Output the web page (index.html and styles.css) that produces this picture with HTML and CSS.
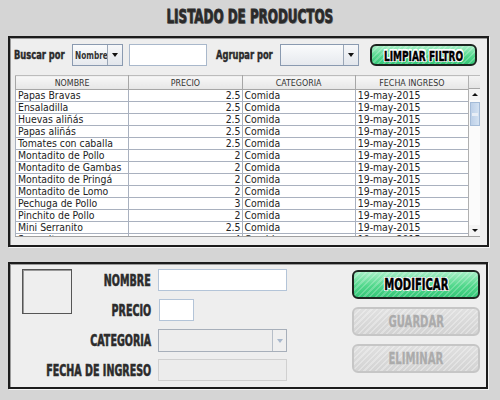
FILE: index.html
```html
<!DOCTYPE html>
<html lang="es">
<head>
<meta charset="utf-8">
<title>Listado de productos</title>
<link rel="stylesheet" href="styles.css">
</head>
<body>
<div class="title"><span class="sq">LISTADO DE PRODUCTOS</span></div>

<section class="panel top">
  <div class="filters">
    <span class="flabel l1"><span class="sq">Buscar por</span></span>
    <div class="combo c1"><span class="cval"><span class="sq">Nombre</span></span><span class="carrow"><i class="tri"></i></span></div>
    <div class="field search"></div>
    <span class="flabel l2"><span class="sq">Agrupar por</span></span>
    <div class="combo c2"><span class="cval"></span><span class="carrow"><i class="tri"></i></span></div>
    <div class="btn green limpiar"><span class="sq">LIMPIAR FILTRO</span></div>
  </div>

  <div class="tablebox">
    <div class="tablewrap">
      <table>
        <thead>
          <tr><th>NOMBRE</th><th>PRECIO</th><th>CATEGORIA</th><th>FECHA INGRESO</th></tr>
        </thead>
        <tbody>
          <tr><td>Papas Bravas</td><td class="num">2.5</td><td>Comida</td><td>19-may-2015</td></tr>
          <tr><td>Ensaladilla</td><td class="num">2.5</td><td>Comida</td><td>19-may-2015</td></tr>
          <tr><td>Huevas aliñás</td><td class="num">2.5</td><td>Comida</td><td>19-may-2015</td></tr>
          <tr><td>Papas aliñás</td><td class="num">2.5</td><td>Comida</td><td>19-may-2015</td></tr>
          <tr><td>Tomates con caballa</td><td class="num">2.5</td><td>Comida</td><td>19-may-2015</td></tr>
          <tr><td>Montadito de Pollo</td><td class="num">2</td><td>Comida</td><td>19-may-2015</td></tr>
          <tr><td>Montadito de Gambas</td><td class="num">2</td><td>Comida</td><td>19-may-2015</td></tr>
          <tr><td>Montadito de Pringá</td><td class="num">2</td><td>Comida</td><td>19-may-2015</td></tr>
          <tr><td>Montadito de Lomo</td><td class="num">2</td><td>Comida</td><td>19-may-2015</td></tr>
          <tr><td>Pechuga de Pollo</td><td class="num">3</td><td>Comida</td><td>19-may-2015</td></tr>
          <tr><td>Pinchito de Pollo</td><td class="num">2</td><td>Comida</td><td>19-may-2015</td></tr>
          <tr><td>Mini Serranito</td><td class="num">2.5</td><td>Comida</td><td>19-may-2015</td></tr>
          <tr><td>Serranito</td><td class="num">4</td><td>Comida</td><td>19-may-2015</td></tr>
        </tbody>
      </table>
    </div>
    <div class="scroll">
      <div class="scorner"></div>
      <div class="sbtn"><i class="tri up"></i></div>
      <div class="strack">
        <div class="thumb"><i class="grip"></i></div>
      </div>
      <div class="sbtn"><i class="tri"></i></div>
    </div>
  </div>
</section>

<section class="panel bottom">
  <div class="form">
    <div class="photo"></div>
    <span class="label r1"><span class="sq">NOMBRE</span></span>
    <div class="field wide r1"></div>
    <span class="label r2"><span class="sq">PRECIO</span></span>
    <div class="field short r2"></div>
    <span class="label r3"><span class="sq">CATEGORIA</span></span>
    <div class="combo disabled wide r3"><span class="cval"></span><span class="carrow"><i class="tri light"></i></span></div>
    <span class="label r4"><span class="sq">FECHA DE INGRESO</span></span>
    <div class="field wide off r4"></div>
  </div>
  <div class="actions">
    <div class="btn green big"><span class="sq">MODIFICAR</span></div>
    <div class="btn gray big"><span class="sq">GUARDAR</span></div>
    <div class="btn gray big"><span class="sq">ELIMINAR</span></div>
  </div>
</section>
</body>
</html>
```

FILE: styles.css
```css
* { box-sizing: border-box; }

html, body {
  margin: 0;
  padding: 0;
}

body {
  width: 500px;
  height: 400px;
  overflow: hidden;
  background: #d5d5d5;
  font-family: "DejaVu Sans Condensed", "DejaVu Sans", sans-serif;
  color: #222;
}

.sq {
  display: inline-block;
  white-space: nowrap;
}

.title {
  height: 34px;
  display: flex;
  align-items: center;
  justify-content: center;
  padding-bottom: 2px;
  margin-bottom: 2px;
  font-weight: bold;
  font-size: 17px;
  color: #2a2a2a;
  text-shadow: 1px 1px 0 #9a9a9a;
  -webkit-text-stroke: 0.7px #2a2a2a;
}

.title .sq { transform: scale(0.78, 1.14); }

.panel {
  margin-left: 8px;
  background: #eeeeee;
  border: 2px solid #1c1c1c;
  box-shadow: inset 1px 1px 0 #9a9a9a, 1px 1px 0 #f4f4f4;
}

.top {
  width: 481px;
  height: 211px;
  padding: 6px 7px 0 4px;
}

.bottom {
  margin-top: 15px;
  width: 480px;
  height: 127px;
  display: flex;
  padding: 5px 0 0 12px;
}

/* filter row */
.filters {
  display: flex;
  align-items: center;
  height: 22px;
}

.flabel {
  white-space: nowrap;
  font-weight: bold;
  font-size: 11px;
  color: #2a2a2a;
  -webkit-text-stroke: 0.4px #2a2a2a;
}

.flabel .sq {
  transform: scale(0.84, 1.1);
  transform-origin: left center;
}

.l1 { width: 58px; }
.l2 { width: 64px; margin-left: 9px; }

.combo {
  display: flex;
  height: 22px;
  border: 1px solid #8a9ab0;
  background: linear-gradient(#fafbfc, #e6e9ee);
}

.cval {
  flex: 1;
  display: flex;
  align-items: center;
  padding-left: 2px;
  overflow: hidden;
  font-weight: bold;
  font-size: 10.5px;
  color: #333;
}

.cval .sq {
  transform: scale(0.78, 1.05);
  transform-origin: left center;
}

.carrow {
  width: 15px;
  flex: none;
  border-left: 1px solid #9aa6b6;
  display: flex;
  align-items: center;
  justify-content: center;
  background: linear-gradient(#f6f7f9, #e2e6ec);
}

.tri {
  width: 0;
  height: 0;
  border-left: 3.5px solid transparent;
  border-right: 3.5px solid transparent;
  border-top: 4px solid #111;
}

.tri.up {
  border-top: 0;
  border-bottom: 4px solid #111;
}

.tri.light { border-top-color: #a8b8cc; }

.c1 { width: 51px; }
.c2 { width: 79px; }

.field {
  height: 22px;
  background: #fff;
  border: 1px solid #b3c4d8;
}

.search {
  width: 78px;
  margin-left: 6px;
  border-color: #a9b8cb;
}

.btn {
  display: flex;
  align-items: center;
  justify-content: center;
  border-radius: 6px;
  font-weight: bold;
  overflow: hidden;
}

.green {
  border: 2px solid #1d2420;
  background:
    repeating-linear-gradient(135deg, rgba(255,255,255,0.22) 0 1.5px, rgba(255,255,255,0) 1.5px 4px),
    linear-gradient(#a6efc6, #52d88c 55%, #35c678);
  color: #000;
  -webkit-text-stroke: 0.4px #000;
  text-shadow:
    -1px -1px 0 #fff, 1px -1px 0 #fff, -1px 1px 0 #fff, 1px 1px 0 #fff,
    0 -1px 0 #fff, 0 1px 0 #fff, -1px 0 0 #fff, 1px 0 0 #fff;
}

.gray {
  border: 2px solid #c6c6c6;
  background:
    repeating-linear-gradient(135deg, rgba(255,255,255,0.3) 0 1.5px, rgba(255,255,255,0) 1.5px 4px),
    linear-gradient(#e0e0e0, #d3d3d3);
  color: #ababab;
  -webkit-text-stroke: 0.3px #ababab;
  text-shadow: 0 0 1px #ececec;
}

.limpiar {
  width: 107px;
  height: 22px;
  margin-left: 11px;
  font-size: 12.5px;
}

.limpiar .sq { transform: scale(0.8, 1.12); }

/* table */
.tablebox {
  display: flex;
  margin-top: 9px;
  margin-left: 1px;
  width: 465px;
  height: 162px;
  border-bottom: 1px solid #a0a0a0;
  background: #fff;
}

.tablewrap {
  width: 453px;
  overflow: hidden;
}

table {
  width: 454px;
  table-layout: fixed;
  border-collapse: collapse;
  font-size: 10.4px;
}

th {
  height: 14px;
  padding: 0;
  font-weight: normal;
  font-size: 8.8px;
  color: #333;
  background: linear-gradient(#f7f7f7, #e6e6e6);
  border: 1px solid #a6a6a6;
  border-top-color: #bcbcbc;
  text-align: center;
  line-height: 12px;
}

td {
  height: 12px;
  padding: 0 1px 0 2px;
  line-height: 11px;
  border: 1px solid #a9b1bf;
  white-space: nowrap;
  overflow: hidden;
  color: #222;
}

td.num {
  text-align: right;
  padding-right: 1px;
}

/* scrollbar */
.scroll {
  width: 12px;
  display: flex;
  flex-direction: column;
  border-left: 1px solid #b0b0b0;
  background: #f2f2f2;
}

.scorner {
  height: 14px;
  background: linear-gradient(#f3f3f3, #e4e4e4);
  border-top: 1px solid #bcbcbc;
  border-bottom: 1px solid #a6a6a6;
}

.sbtn {
  height: 11px;
  display: flex;
  align-items: center;
  justify-content: center;
  background: #f4f4f4;
}

.sbtn .tri {
  border-left-width: 3px;
  border-right-width: 3px;
  border-top-width: 3px;
}

.sbtn .tri.up { border-bottom-width: 3px; }

.strack {
  flex: 1;
  padding-top: 2px;
  background: #fbfbfb;
}

.thumb {
  height: 24px;
  margin-left: 1px;
  width: 10px;
  background: linear-gradient(90deg, #bdd0e8, #d4e2f2);
  border: 1px solid #a5bcd8;
  display: flex;
  align-items: center;
  justify-content: center;
}

.grip {
  width: 6px;
  height: 3px;
  background: #e8eef6;
}

/* bottom form */
.form {
  display: grid;
  grid-template-columns: 128px 129px;
  grid-template-rows: repeat(4, 22px);
  column-gap: 8px;
  row-gap: 8px;
}

.photo {
  grid-column: 1;
  grid-row: 1 / 3;
  justify-self: start;
  align-self: start;
  width: 50px;
  height: 45px;
  border: 1px solid #555;
  box-shadow: inset 1px 1px 0 #999;
}

.label {
  grid-column: 1;
  justify-self: end;
  align-self: center;
  white-space: nowrap;
  font-weight: bold;
  font-size: 14px;
  color: #2b2b2b;
  -webkit-text-stroke: 0.5px #2b2b2b;
  margin-right: -1px;
}

.label .sq {
  transform: scale(0.76, 1.15);
  transform-origin: right center;
}

.r1 { grid-row: 1; }
.r2 { grid-row: 2; }
.r3 { grid-row: 3; }
.r4 { grid-row: 4; }

.form .field, .form .combo { grid-column: 2; }

.wide { width: 129px; }
.short { width: 35px; margin-left: 1px; }

.combo.disabled {
  height: 23px;
  background: #ededed;
  border: 1px solid #a7afba;
}

.combo.disabled .carrow {
  width: 14px;
  background: #efefef;
  border-left-color: #b6bec8;
}

.field.off {
  background: #ececec;
  border-color: #d0d0d0;
}

.actions {
  display: flex;
  flex-direction: column;
  gap: 8px;
  margin-left: 65px;
  margin-top: 1px;
}

.big {
  width: 128px;
  height: 29px;
  font-size: 13px;
}

.big .sq { transform: scale(0.86, 1.15); }
```
